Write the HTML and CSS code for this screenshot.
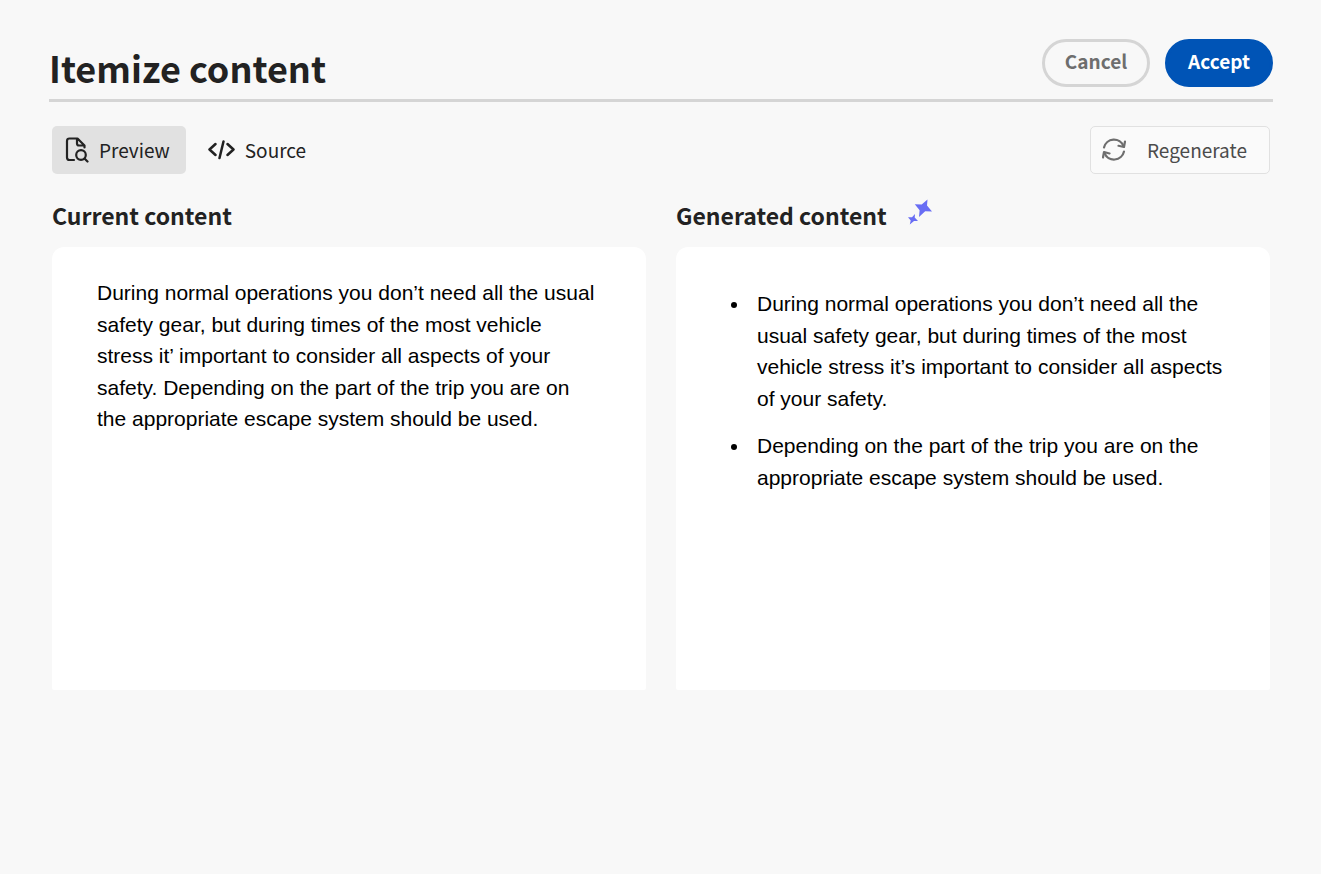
FILE: index.html
```html
<!DOCTYPE html>
<html lang="en">
<head>
<meta charset="utf-8">
<meta name="viewport" content="width=device-width, initial-scale=1">
<title>Itemize content</title>
<link rel="stylesheet" href="styles.css">
</head>
<body>
<header class="header">
  <h1 class="title">Itemize content</h1>
  <div class="actions">
    <button class="pill pill-cancel" type="button">Cancel</button>
    <button class="pill pill-accept" type="button">Accept</button>
  </div>
</header>
<main class="main">
  <div class="toolbar">
    <div class="views">
      <button class="view view-active" type="button" aria-pressed="true">
        <svg width="24" height="26" viewBox="0 0 24 26" fill="none" stroke="currentColor" stroke-width="2.200" stroke-linecap="round" stroke-linejoin="round" aria-hidden="true"><path d="M9 23H4.500Q2 23 2 20.500V4Q2 1.500 4.500 1.500H12.500L19.500 8.500V10.500M12 1.500V6.500Q12 8.500 14 8.500H19.500"/><circle cx="16" cy="18" r="4.800"/><path d="M19.500 21.500L22.500 24.500"/></svg>
        Preview
      </button>
      <button class="view" type="button" aria-pressed="false">
        <svg width="28" height="20" viewBox="0 0 28 20" fill="none" stroke="currentColor" stroke-width="2.500" stroke-linecap="round" stroke-linejoin="round" aria-hidden="true"><path d="M8.500 4L2.500 9.500L8.500 15M20.500 4L26.500 9.500L20.500 15M16.500 1.500L12.500 18"/></svg>
        Source
      </button>
    </div>
    <button class="regenerate" type="button">
      <svg width="24" height="24" viewBox="0 0 24 24" fill="none" stroke="#6e6e6e" stroke-width="2.200" stroke-linecap="round" stroke-linejoin="round" aria-hidden="true"><path d="M2 9.500A10.200 10.200 0 0 1 21.500 8.300M22 13.500A10.200 10.200 0 0 1 2.500 15"/><path d="M23 3.500L22 9L16.500 7.800M1 19.500L2 14L7.500 15.500"/></svg>
      Regenerate
    </button>
  </div>
  <div class="columns">
    <section class="column">
      <h2 class="heading">Current content</h2>
      <div class="card">
        <p class="text">During normal operations you don’t need all the usual safety gear, but during times of the most vehicle stress it’ important to consider all aspects of your safety. Depending on the part of the trip you are on the appropriate escape system should be used.</p>
      </div>
    </section>
    <section class="column">
      <h2 class="heading">Generated content
        <svg width="26" height="26" viewBox="0 0 26 26" fill="#686df4" aria-hidden="true"><path d="M20.500 0.500L20 6.500L25 12.500L18.200 12.200L12 18L12.600 11.200L7.800 5.200L14.700 5.600ZM8 15L7.700 18.600L11 22L7 22L2.800 25.500L3.700 21.600L1 18.300L5 18.300Z"/></svg>
      </h2>
      <div class="card card-list">
        <ul class="list">
          <li>During normal operations you don’t need all the usual safety gear, but during times of the most vehicle stress it’s important to consider all aspects of your safety.</li>
          <li>Depending on the part of the trip you are on the appropriate escape system should be used.</li>
        </ul>
      </div>
    </section>
  </div>
</main>
</body>
</html>
```
FILE: styles.css
```css
* {
  box-sizing: border-box;
}

body {
  margin: 0;
  padding: 36px 48px 48px 49px;
  background: #f8f8f8;
  color: #222;
  font-family: "Noto Sans CJK JP", "Open Sans", sans-serif;
}

button {
  font: inherit;
  color: inherit;
  cursor: pointer;
}

.header {
  display: flex;
  justify-content: space-between;
  align-items: flex-start;
  padding: 3px 0 4px;
  border-bottom: 3px solid #d5d5d5;
}

.title {
  margin: 0;
  font-size: 36px;
  line-height: 56px;
  font-weight: 700;
}

.actions {
  display: flex;
  gap: 15px;
}

.pill {
  width: 108px;
  height: 48px;
  padding: 0 0 5px;
  border: 3px solid #d5d5d5;
  border-radius: 24px;
  background: transparent;
  color: #6e6e6e;
  font-size: 19px;
  line-height: 24px;
  font-weight: 700;
}

.pill-accept {
  border-color: #0054b6;
  background: #0054b6;
  color: #fff;
}

.main {
  padding: 24px 3px 0;
}

.toolbar {
  display: flex;
  justify-content: space-between;
}

.views {
  display: flex;
  gap: 8px;
}

.view,
.regenerate {
  display: flex;
  align-items: center;
  height: 48px;
  border: 0;
  border-radius: 5px;
  background: transparent;
  font-size: 19px;
  line-height: 24px;
}

.view {
  gap: 10px;
  padding: 0 16px 0 13px;
}

.view-active {
  background: #e1e1e1;
}

.regenerate {
  gap: 21px;
  width: 180px;
  padding: 0 11px;
  border: 1px solid #e1e1e1;
  background: #fafafa;
  color: #4b4b4b;
}

.columns {
  display: grid;
  grid-template-columns: 1fr 1fr;
  gap: 30px;
}

.column {
  display: flex;
  flex-direction: column;
}

.heading {
  display: flex;
  gap: 20px;
  margin: 0;
  padding: 25px 0 16px;
  font-size: 23px;
  line-height: 32px;
  font-weight: 700;
}

.card {
  flex: 1;
  min-height: 443px;
  padding: 30px 45px;
  border-radius: 12px 12px 2px 2px;
  background: #fff;
  color: #000;
  font-family: "Liberation Sans", Arial, sans-serif;
  font-size: 21px;
  line-height: 1.5;
}

.card-list {
  padding-top: 41px;
}

.text {
  margin: 0;
}

.list {
  margin: 0;
  padding-left: 29px;
}

.list li {
  padding-left: 7px;
}

.list li + li {
  margin-top: 16px;
}
```
